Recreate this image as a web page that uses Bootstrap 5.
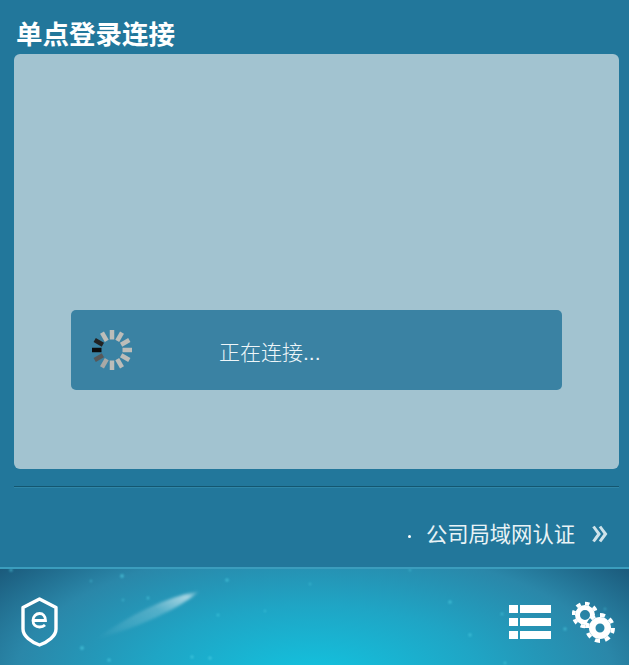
<!doctype html>
<html lang="zh-CN">

<head>
    <meta charset="utf-8">
    <meta name="viewport" content="width=device-width, initial-scale=1">
    <title>单点登录连接</title>

    <link href="https://cdn.jsdelivr.net/npm/bootstrap@5.3.3/dist/css/bootstrap.min.css" rel="stylesheet">
    <style>
        html, body {
            height: 665px;
            overflow: hidden;
        }

        body {
            background-color: #22779b;
            font-family: "Liberation Sans", "Noto Sans CJK SC", sans-serif;
        }

        .sso-main {
            height: 567px;
            padding: 0 10px 0 14px;
        }

        .sso-title {
            height: 54px;
            padding: 20px 0 0 2px;
            margin: 0;
            font-size: 26.5px;
            line-height: 30px;
            font-weight: 700;
            color: #fff;
        }

        .sso-panel {
            height: 415px;
            background: #a2c3d0;
            border-radius: 6px;
            padding: 256px 57px 0 57px;
        }

        .sso-status {
            height: 80px;
            background: #3a82a3;
            border-radius: 5px;
            padding-left: 20px;
            color: #eef6f9;
            font-size: 21px;
            font-weight: 300;
        }

        .sso-status-text {
            margin-left: 86px;
            margin-top: 6px;
        }

        .sso-divider {
            height: 2px;
            margin-top: 17px;
            background: #14566f;
            border-bottom: 1px solid #2f86a8;
        }

        .sso-auth {
            height: 79px;
            padding: 17px 11px 0 0;
            color: #e9f3f6;
            font-size: 21.3px;
        }

        .sso-dot {
            width: 3px;
            height: 3px;
            border-radius: 50%;
            background: #fff;
            margin-right: 15px;
        }

        .sso-chevron {
            margin-left: 17px;
            margin-top: -4px;
        }

        .sso-footer {
            height: 98px;
            border-top: 2px solid #3b9dbd;
            background: radial-gradient(ellipse 440px 195px at 50% 115%, #12c4e0 0%, #1fa5c5 38%, #2a87a9 68%, #15496a 100%);
        }

        .sso-sky {
            top: 0;
            left: 0;
        }

        .sso-actions {
            z-index: 1;
            padding: 10px 13px 0 21px;
            height: 100%;
        }

        .sso-tools {
            gap: 21px;
        }
    </style>
</head>

<body class="d-flex flex-column m-0">
    <div class="sso-main">
        <h1 class="sso-title">单点登录连接</h1>
        <div class="sso-panel">
            <div class="sso-status d-flex align-items-center">
                <svg width="42" height="42" viewBox="-21 -21 42 42">
                    <g stroke-width="4.5" stroke="#bdbdb9">
                        <line x1="10.5" y1="0" x2="20" y2="0" transform="rotate(0)" />
                        <line x1="10.5" y1="0" x2="20" y2="0" transform="rotate(30)" />
                        <line x1="10.5" y1="0" x2="20" y2="0" transform="rotate(60)" />
                        <line x1="10.5" y1="0" x2="20" y2="0" transform="rotate(90)" />
                        <line x1="10.5" y1="0" x2="20" y2="0" transform="rotate(120)" stroke="#a9a9a6" />
                        <line x1="10.5" y1="0" x2="20" y2="0" transform="rotate(150)" stroke="#585858" />
                        <line x1="10.5" y1="0" x2="20" y2="0" transform="rotate(180)" stroke="#0c0c0c" />
                        <line x1="10.5" y1="0" x2="20" y2="0" transform="rotate(210)" stroke="#222" />
                        <line x1="10.5" y1="0" x2="20" y2="0" transform="rotate(240)" />
                        <line x1="10.5" y1="0" x2="20" y2="0" transform="rotate(270)" />
                        <line x1="10.5" y1="0" x2="20" y2="0" transform="rotate(300)" />
                        <line x1="10.5" y1="0" x2="20" y2="0" transform="rotate(330)" />
                    </g>
                </svg>
                <span class="sso-status-text">正在连接...</span>
            </div>
        </div>
        <div class="sso-divider"></div>
        <div class="sso-auth d-flex align-items-center justify-content-end">
            <span class="sso-dot"></span>
            <span>公司局域网认证</span>
            <svg class="sso-chevron" width="16" height="18" viewBox="0 0 16 18" fill="none" stroke="#cfe3ea" stroke-width="3">
                <path d="M1.5 1.5C4 5 5.5 7 7 9 5.5 11 4 13 1.5 16.5" />
                <path d="M8 1.5C10.5 5 12 7 13.5 9 12 11 10.5 13 8 16.5" />
            </svg>
        </div>
    </div>

    <div class="sso-footer position-relative">
        <svg class="sso-sky position-absolute" width="629" height="96" viewBox="0 0 629 96">
            <defs>
                <linearGradient id="streak" x1="0" y1="1" x2="1" y2="0">
                    <stop offset="0" stop-color="#fff" stop-opacity="0" />
                    <stop offset="0.6" stop-color="#fff" stop-opacity="0.22" />
                    <stop offset="0.88" stop-color="#fff" stop-opacity="0.6" />
                    <stop offset="1" stop-color="#fff" stop-opacity="0" />
                </linearGradient>
                <filter id="soft"><feGaussianBlur stdDeviation="1.5" /></filter>
                <filter id="spark"><feGaussianBlur stdDeviation="0.8" /></filter>
            </defs>
            <path d="M96 70C130 46 165 28 200 22 178 40 140 58 96 70Z" fill="url(#streak)" filter="url(#soft)" />
            <g fill="#4fd0e4" opacity="0.7" filter="url(#spark)">
                <circle cx="11" cy="1" r="1.5" />
                <circle cx="122" cy="7" r="1.8" />
                <circle cx="91" cy="12" r="1" />
                <circle cx="148" cy="29" r="1.3" />
                <circle cx="123" cy="31" r="1" />
                <circle cx="82" cy="79" r="1.8" />
                <circle cx="109" cy="91" r="1.6" />
                <circle cx="227" cy="11" r="1.6" />
                <circle cx="218" cy="46" r="1.2" />
                <circle cx="192" cy="88" r="1.4" />
                <circle cx="210" cy="89" r="1.6" />
                <circle cx="450" cy="33" r="1.6" />
                <circle cx="470" cy="66" r="1.4" />
                <circle cx="502" cy="45" r="1.2" />
                <circle cx="565" cy="60" r="1.4" />
                <circle cx="505" cy="94" r="1.2" />
                <circle cx="410" cy="1" r="1" />
                <circle cx="265" cy="42" r="1" />
                <circle cx="310" cy="15" r="1" />
                <circle cx="605" cy="40" r="1" />
            </g>
        </svg>
        <div class="sso-actions position-relative d-flex align-items-center justify-content-between">
            <svg width="37" height="50" viewBox="0 0 37 50" fill="none" stroke="#fff">
                <path d="M18.5 2 35 10.5V32C35 39 27 45 18.5 48 10 45 2 39 2 32V10.5Z" stroke-width="3.4" stroke-linejoin="round" />
                <path d="M12.5 23.5H24.5C24.5 19 22 16.5 18.5 16.5S12 19.5 12 23.5 14.5 30 18.5 30C21 30 23 29 24 28" stroke-width="2.8" />
            </svg>
            <div class="sso-tools d-flex align-items-center">
                <svg width="42" height="34" viewBox="0 0 42 34" fill="#fff">
                    <rect x="0" y="0" width="9" height="8" />
                    <rect x="11" y="0" width="31" height="8" />
                    <rect x="0" y="13" width="9" height="8" />
                    <rect x="11" y="13" width="31" height="8" />
                    <rect x="0" y="26" width="9" height="8" />
                    <rect x="11" y="26" width="31" height="8" />
                </svg>
                <svg width="44" height="44" viewBox="0 0 44 44" fill="none" stroke="#fff">
                    <circle cx="13" cy="15" r="7.5" stroke-width="5" />
                    <circle cx="13" cy="15" r="11.5" stroke-width="3.6" pathLength="80" stroke-dasharray="5 5" />
                    <circle cx="28" cy="28" r="14" fill="#2a87a9" stroke="none" />
                    <circle cx="28" cy="28" r="7.75" stroke-width="6.5" />
                    <circle cx="28" cy="28" r="13" stroke-width="4" pathLength="80" stroke-dasharray="5 5" />
                </svg>
            </div>
        </div>
    </div>

    <script src="https://cdn.jsdelivr.net/npm/bootstrap@5.3.3/dist/js/bootstrap.bundle.min.js"></script>
</body>

</html>
